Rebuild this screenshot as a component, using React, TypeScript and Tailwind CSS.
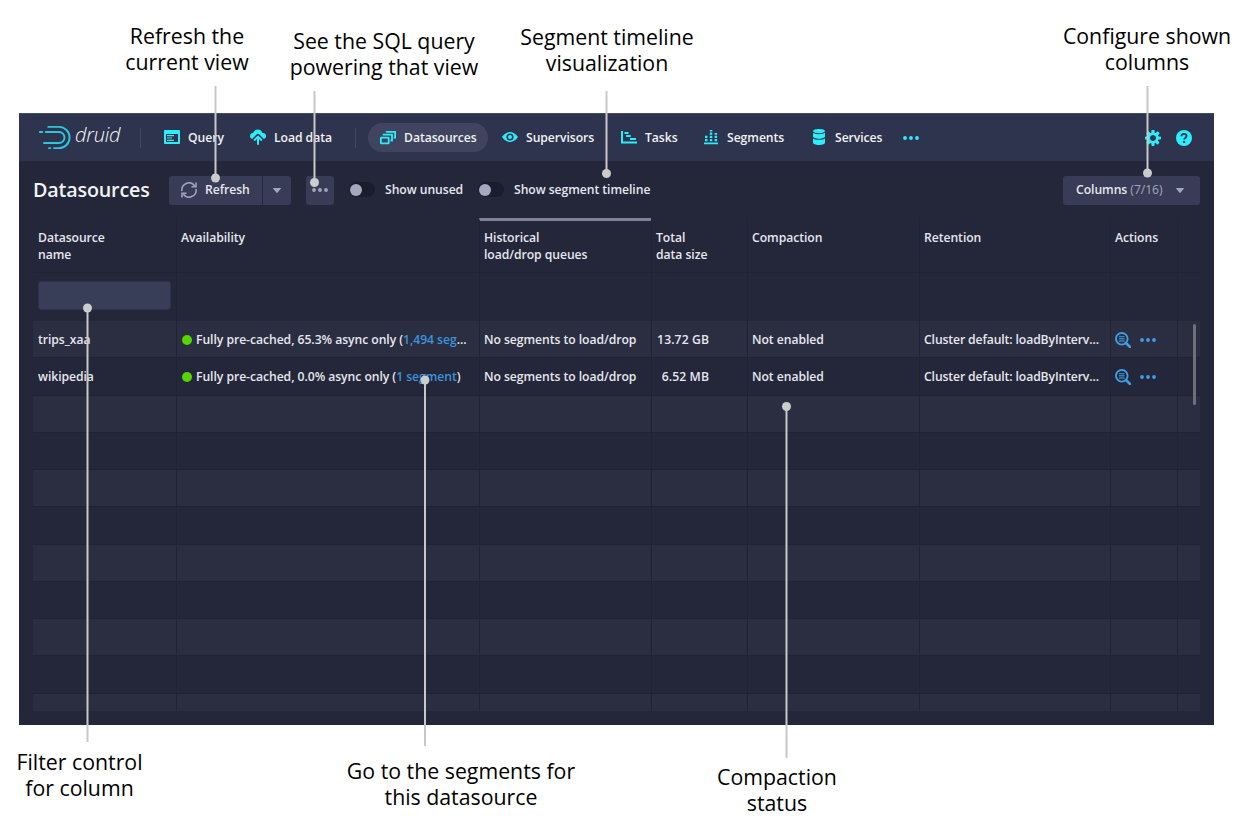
import type { ReactNode } from 'react';

function Svg({ children, className = 'w-4 h-4' }: { children: ReactNode; className?: string }) {
  return (
    <svg viewBox="0 0 16 16" fill="currentColor" className={`shrink-0 ${className}`}>
      {children}
    </svg>
  );
}

const QueryIcon = () => (
  <Svg>
    <path
      fillRule="evenodd"
      d="M1 1h14c.55 0 1 .45 1 1v12c0 .55-.45 1-1 1H1c-.55 0-1-.45-1-1V2c0-.55.45-1 1-1zm1 4v8h12V5H2z"
    />
    <path d="M3 6h7v1.2H3zM3 8.4h5v1.2H3zM3 10.8h7V12H3z" />
  </Svg>
);
const LoadIcon = () => (
  <Svg>
    <path d="M8 4.700c.5 0 .9.2 1.200.5l4.700 4.700c1.200-.4 2.100-1.300 2.100-2.500A3.300 3.300 0 0 0 12.700 4H12.300A4.800 4.800 0 0 0 3.100 4 3.400 3.400 0 0 0 0 7.400c0 1.200.9 2.100 2.100 2.500L6.800 5.200c.3-.3.7-.5 1.200-.5z" />
    <path d="M8.700 6.900a1 1 0 0 0-1.400 0L3.900 10.300a1 1 0 0 0 1.400 1.400L7 10.100V15a1 1 0 0 0 2 0V10.100l1.700 1.600a1 1 0 0 0 1.400-1.400z" />
  </Svg>
);
const StackIcon = () => (
  <Svg>
    <g fill="none" stroke="currentColor" strokeWidth="1.8">
      <rect x=".9" y="7.6" width="7.800" height="5.7" rx=".4" />
      <path d="M3.600 5.500V4.700h8.400v5.800h-1.500M6.700 2.600V1.800h8.400v5.800h-1.500" />
    </g>
  </Svg>
);
const EyeIcon = () => (
  <Svg>
    <path
      fillRule="evenodd"
      d="M16 8c-.2-.5-3.6-5-8-5S.2 7.500 0 8c.2.5 3.600 5 8 5s7.800-4.500 8-5zM8 11.600a3.600 3.600 0 110-7.200 3.600 3.600 0 010 7.200zM8 6a2 2 0 100 4 2 2 0 000-4z"
    />
  </Svg>
);
const GanttIcon = () => (
  <Svg>
    <path d="M0 2h2v10.500h14V14.400H0zM3.500 3h4v1.900h-4zM5.200 6h4.500v1.900H5.200zM9 9h6v1.900H9z" />
  </Svg>
);
const SegmentsIcon = () => (
  <Svg>
    <path d="M1 13.400h14v1.800H1zM2 10h2.500v2.300H2zM2 6.700h2.500V9H2zM6.800 10h2.500v2.300H6.800zM6.800 6.700h2.500V9H6.800zM6.800 3.400h2.500v2.300H6.800zM6.800.9h2.500v1.500H6.800zM11.600 10h2.500v2.300h-2.500zM11.600 6.700h2.500V9h-2.500zM11.600 4h2.500v1.700h-2.500z" />
  </Svg>
);
const DatabaseIcon = () => (
  <Svg>
    <path d="M8 0C4.700 0 2 .9 2 2.100s2.700 2.100 6 2.100 6-.9 6-2.100S11.300 0 8 0zM2 3.600v3.900C2 8.700 4.700 9.700 8 9.700s6-1 6-2.200V3.600C13.100 4.700 10.800 5.200 8 5.200S2.900 4.700 2 3.600zM2 9.200v4.600C2 15 4.700 16 8 16s6-1 6-2.200V9.200c-.9 1.100-3.200 1.600-6 1.600s-5.100-.5-6-1.600z" />
  </Svg>
);
const MoreIcon = ({ className }: { className?: string }) => (
  <Svg className={className}>
    <circle cx="2" cy="8" r="1.900" />
    <circle cx="8" cy="8" r="1.900" />
    <circle cx="14" cy="8" r="1.900" />
  </Svg>
);
const CogIcon = () => (
  <Svg>
    <path d="M15.190 6.390h-1.850c-.11-.37-.27-.71-.45-1.040l1.360-1.360c.31-.31.31-.82 0-1.130l-1.130-1.130c-.31-.31-.82-.31-1.130 0l-1.360 1.360c-.33-.17-.67-.33-1.040-.44V.79c0-.44-.36-.8-.8-.8h-1.600c-.44 0-.8.36-.8.8v1.860c-.39.12-.75.28-1.100.47l-1.300-1.300c-.3-.3-.79-.3-1.090 0L1.820 2.910c-.3.3-.3.79 0 1.090l1.300 1.300c-.2.34-.36.7-.48 1.090H.79c-.44 0-.8.36-.8.8v1.600c0 .44.36.8.8.8h1.850c.11.37.27.71.45 1.040l-1.360 1.360c-.31.31-.31.82 0 1.130l1.130 1.130c.31.31.82.31 1.130 0l1.360-1.360c.33.18.67.33 1.040.44v1.860c0 .44.36.8.8.8h1.600c.44 0 .8-.36.8-.8v-1.860c.39-.12.75-.28 1.100-.47l1.300 1.300c.3.3.79.3 1.090 0l1.090-1.090c.3-.3.3-.79 0-1.090l-1.300-1.300c.19-.35.36-.71.48-1.100h1.850c.44 0 .8-.36.8-.8v-1.600a.816.816 0 00-.81-.79zm-7.200 4.600c-1.660 0-3-1.340-3-3s1.340-3 3-3 3 1.340 3 3-1.340 3-3 3z" />
  </Svg>
);
const HelpIcon = () => (
  <Svg>
    <circle cx="8" cy="8" r="8" />
    <path d="M5.500 6.200C5.600 4.600 6.600 3.900 8 3.900s2.500.8 2.500 2.100c0 1.600-2.200 1.700-2.300 3.500" fill="none" stroke="#2f344e" strokeWidth="1.900" />
    <rect x="7.100" y="10.900" width="2" height="2" fill="#2f344e" />
  </Svg>
);
const RefreshIcon = () => (
  <Svg className="w-4 h-4 text-[#9fa3bb]">
    <g fill="none" stroke="currentColor" strokeWidth="1.600">
      <path d="M1 9A7 7 0 0 1 13.600 3.800M15 7A7 7 0 0 1 2.400 12.200" />
      <path d="M15 .4v4.400h-4.500M1 15.600v-4.400h4.500" />
    </g>
  </Svg>
);
const CaretIcon = () => (
  <svg viewBox="0 0 8 5" className="h-[5px] w-2 shrink-0 fill-[#a3a7bd]">
    <path d="M.5 0h7c.4 0 .6.5.3.8L4.400 4.800a.5.5 0 01-.8 0L.2.8C-.1.500.1 0 .5 0z" />
  </svg>
);
const MagnifyIcon = () => (
  <Svg>
    <circle cx="6.800" cy="6.800" r="5.800" fill="none" stroke="currentColor" strokeWidth="1.900" />
    <path d="M11 11l4 4" stroke="currentColor" strokeWidth="2.500" strokeLinecap="round" />
    <path d="M4 3.900h5.600v1.400H4zM4 6.100h5.600v1.400H4zM4 8.300h5.600v1.400H4z" opacity=".75" />
  </Svg>
);

const Logo = () => (
  <div className="flex w-[101px] shrink-0 items-center">
    <svg viewBox="0 0 32 26" className="h-[26px] w-8 shrink-0" fill="none" stroke="#2bc8dc" strokeWidth="1.900" strokeLinecap="round">
      <path d="M9.300 1.900H20a10.600 10.600 0 0 1 0 21.200H15" />
      <path d="M6.800 7H20a5.500 5.500 0 0 1 0 11H5" />
      <path d="M.9 7h2.400M10 23.100h1.300" />
    </svg>
    <span className="ml-[4px] -mt-[5px] text-[20px] font-light italic leading-6 tracking-[-0.200px] text-[#f6f7fa]">druid</span>
  </div>
);

function NavItem({ icon, label, className }: { icon: ReactNode; label: string; className: string }) {
  return (
    <div className={`flex shrink-0 items-center gap-2 text-[#2ceefb] ${className}`}>
      {icon}
      <span className="pt-px text-[#f0f1f5]">{label}</span>
    </div>
  );
}

function Toggle({ label, className }: { label: string; className: string }) {
  return (
    <div className={`flex shrink-0 items-center ${className}`}>
      <span className="flex h-[15px] w-[26px] items-center rounded-full bg-[#1b1d2d] pl-[1px]">
        <span className="h-3 w-3 rounded-full bg-[#a5a8bf]" />
      </span>
      <span className="ml-[10px]">{label}</span>
    </div>
  );
}

const cols = 'grid grid-cols-[143px_303px_172px_96px_172px_191px_67px_22px]';
const first = 'min-w-0 truncate pl-[5px]';
const cell = 'min-w-0 truncate border-l border-l-[#202235] pl-[4px]';

type Row = { name: string; before: string; link: string; after: string; size: string };
const rows: Row[] = [
  { name: 'trips_xaa', before: 'Fully pre-cached, 65.3% async only (', link: '1,494 seg', after: '...', size: '13.72 GB' },
  { name: 'wikipedia', before: 'Fully pre-cached, 0.0% async only (', link: '1 segment', after: ')', size: '6.52 MB' },
];

function DataRow({ row, striped }: { row?: Row; striped: boolean }) {
  return (
    <div className={`${cols} h-[37.250px] shrink-0 border-b border-[#202235] leading-[37.500px] ${striped ? 'bg-[#2b2d41]' : ''}`}>
      <div className={first}>{row?.name}</div>
      <div className={`${cell} flex items-start`}>
        {row && (
          <>
            <span className="ml-[1px] mr-[4px] mt-[13.500px] h-[10px] w-[10px] shrink-0 rounded-full bg-[#57d500]" />
            <span className="whitespace-pre">
              {row.before}
              <span className="text-[#3a94da]">{row.link}</span>
              {row.after}
            </span>
          </>
        )}
      </div>
      <div className={cell}>{row && 'No segments to load/drop'}</div>
      <div className={cell}>{row && <span className="block w-[53px] whitespace-nowrap text-right tracking-[0.080px]">{row.size}</span>}</div>
      <div className={cell}>{row && 'Not enabled'}</div>
      <div className={`${cell} tracking-[-0.120px]`}>{row && 'Cluster default: loadByInterv...'}</div>
      <div className={`${cell} flex items-start gap-[9px] pt-[11px] text-[#3f9fe6]`}>
        {row && (
          <>
            <MagnifyIcon />
            <MoreIcon />
          </>
        )}
      </div>
      <div className={cell} />
    </div>
  );
}

function Table() {
  return (
    <div className="relative mx-[14px] mt-[13px] flex h-[493px] flex-col overflow-hidden">
      <div className={`${cols} h-[55px] shrink-0 border-b border-[#202235] leading-[17px]`}>
        <div className={`${first} pt-[11px]`}>Datasource<br />name</div>
        <div className={`${cell} pt-[11px]`}>Availability</div>
        <div className={`${cell} border-t-[3px] border-t-[#7d819c] pt-[8px]`}>Historical<br />load/drop queues</div>
        <div className={`${cell} pt-[11px]`}>Total<br />data size</div>
        <div className={`${cell} pt-[11px]`}>Compaction</div>
        <div className={`${cell} pt-[11px]`}>Retention</div>
        <div className={`${cell} pt-[11px]`}>Actions</div>
        <div className={cell} />
      </div>
      <div className={`${cols} h-[48px] shrink-0`}>
        <div className={`${first} pt-[8px]`}>
          <div className="h-[29px] w-[133px] rounded-[3px] border border-[#2e324a] bg-[#393e58]" />
        </div>
        {[1, 2, 3, 4, 5, 6, 7].map((i) => (
          <div key={i} className={cell} />
        ))}
      </div>
      {Array.from({ length: 11 }, (_, i) => (
        <DataRow key={i} row={rows[i]} striped={i % 2 === 0} />
      ))}
      <div className="absolute right-[4px] top-[106px] h-[81px] w-[3px] rounded-full bg-[#6f7077]" />
    </div>
  );
}

function Callout({ text, className }: { text: string; className: string }) {
  return (
    <div className={`absolute w-[240px] whitespace-pre-line text-center text-[21.300px] leading-[26px] text-black ${className}`}>
      {text}
    </div>
  );
}

const leaders = [
  { x: 215.5, from: 86, to: 178 },
  { x: 314.500, from: 91, to: 182.500 },
  { x: 606.500, from: 91, to: 173.500 },
  { x: 1147.500, from: 86, to: 173 },
  { x: 87.500, from: 742, to: 308 },
  { x: 425, from: 746, to: 380 },
  { x: 786.500, from: 758, to: 406.500 },
];

export default function App() {
  return (
    <div className="relative h-[840px] w-[1250px] overflow-hidden bg-white pt-[113px] font-['Open_Sans','Noto_Sans',sans-serif]">
      <div className="ml-[19px] h-[612px] w-[1195px] bg-[#24263a] text-[12.200px] font-[540] tracking-[-0.055px] text-[#e6e7ee]">
        <header className="flex h-12 items-center border-t border-[#474b61] bg-[#2f344e] pl-[20px]">
          <Logo />
          <div className="mr-[23px] h-5 w-px bg-[#41465f]" />
          <NavItem icon={<QueryIcon />} label="Query" className="w-[86px]" />
          <NavItem icon={<LoadIcon />} label="Load data" className="w-[105px]" />
          <div className="mr-[12px] h-5 w-px bg-[#41465f]" />
          <NavItem icon={<StackIcon />} label="Datasources" className="mr-[14px] h-[29px] w-[120px] rounded-full bg-[#40445f] pl-[12px]" />
          <NavItem icon={<EyeIcon />} label="Supervisors" className="w-[119px]" />
          <NavItem icon={<GanttIcon />} label="Tasks" className="w-[82px]" />
          <NavItem icon={<SegmentsIcon />} label="Segments" className="w-[108px]" />
          <NavItem icon={<DatabaseIcon />} label="Services" className="w-[92px]" />
          <div className="flex flex-1 items-center text-[#2ceefb]">
            <MoreIcon />
            <div className="ml-auto mr-[22px] flex gap-[15px]">
              <CogIcon />
              <HelpIcon />
            </div>
          </div>
        </header>
        <div className="mt-[14px] flex h-[30px] items-center pl-[14px] pr-[14px]">
          <h1 className="w-[136px] shrink-0 text-[19.700px] leading-[30px] tracking-[-0.150px] text-[#f2f3f7]">Datasources</h1>
          <div className="flex h-[29px] w-[93px] items-center gap-2 rounded-l-[3px] bg-[#383c56] pl-[12px]">
            <RefreshIcon />
            <span>Refresh</span>
          </div>
          <div className="ml-px flex h-[29px] w-[28px] items-center justify-center rounded-r-[3px] bg-[#383c56]">
            <CaretIcon />
          </div>
          <div className="ml-[15px] flex h-[29px] w-[28px] items-center justify-center rounded-[3px] bg-[#383c56] text-[#a3a7bd]">
            <MoreIcon />
          </div>
          <Toggle label="Show unused" className="ml-[15px] w-[129px]" />
          <Toggle label="Show segment timeline" className="" />
          <div className="ml-auto flex h-[29px] w-[137px] items-center rounded-[3px] bg-[#383c56] pl-[13px]">
            <span>
              Columns <span className="font-normal text-[#a3a7bd]">(7/16)</span>
            </span>
            <span className="ml-auto mr-[16px] flex">
              <CaretIcon />
            </span>
          </div>
        </div>
        <Table />
      </div>

      <svg viewBox="0 0 1250 840" className="pointer-events-none absolute inset-0 h-[840px] w-[1250px]">
        {leaders.map((l) => (
          <g key={l.x}>
            <path d={`M${l.x} ${l.from}V${l.to}`} stroke="#c8c8c8" strokeWidth="2" />
            <circle cx={l.x} cy={l.to} r="4.500" fill="#cccccc" />
          </g>
        ))}
      </svg>
      <Callout className="left-[67px] top-[23px]" text={'Refresh the\ncurrent view'} />
      <Callout className="left-[264px] top-[28px]" text={'See the SQL query\npowering that view'} />
      <Callout className="left-[487px] top-[24px]" text={'Segment timeline\nvisualization'} />
      <Callout className="left-[1027px] top-[23px]" text={'Configure shown\ncolumns'} />
      <Callout className="-left-[40.500px] top-[749px]" text={'Filter control\nfor column'} />
      <Callout className="left-[341px] top-[758px]" text={'Go to the segments for\nthis datasource'} />
      <Callout className="left-[657px] top-[764px]" text={'Compaction\nstatus'} />
    </div>
  );
}
